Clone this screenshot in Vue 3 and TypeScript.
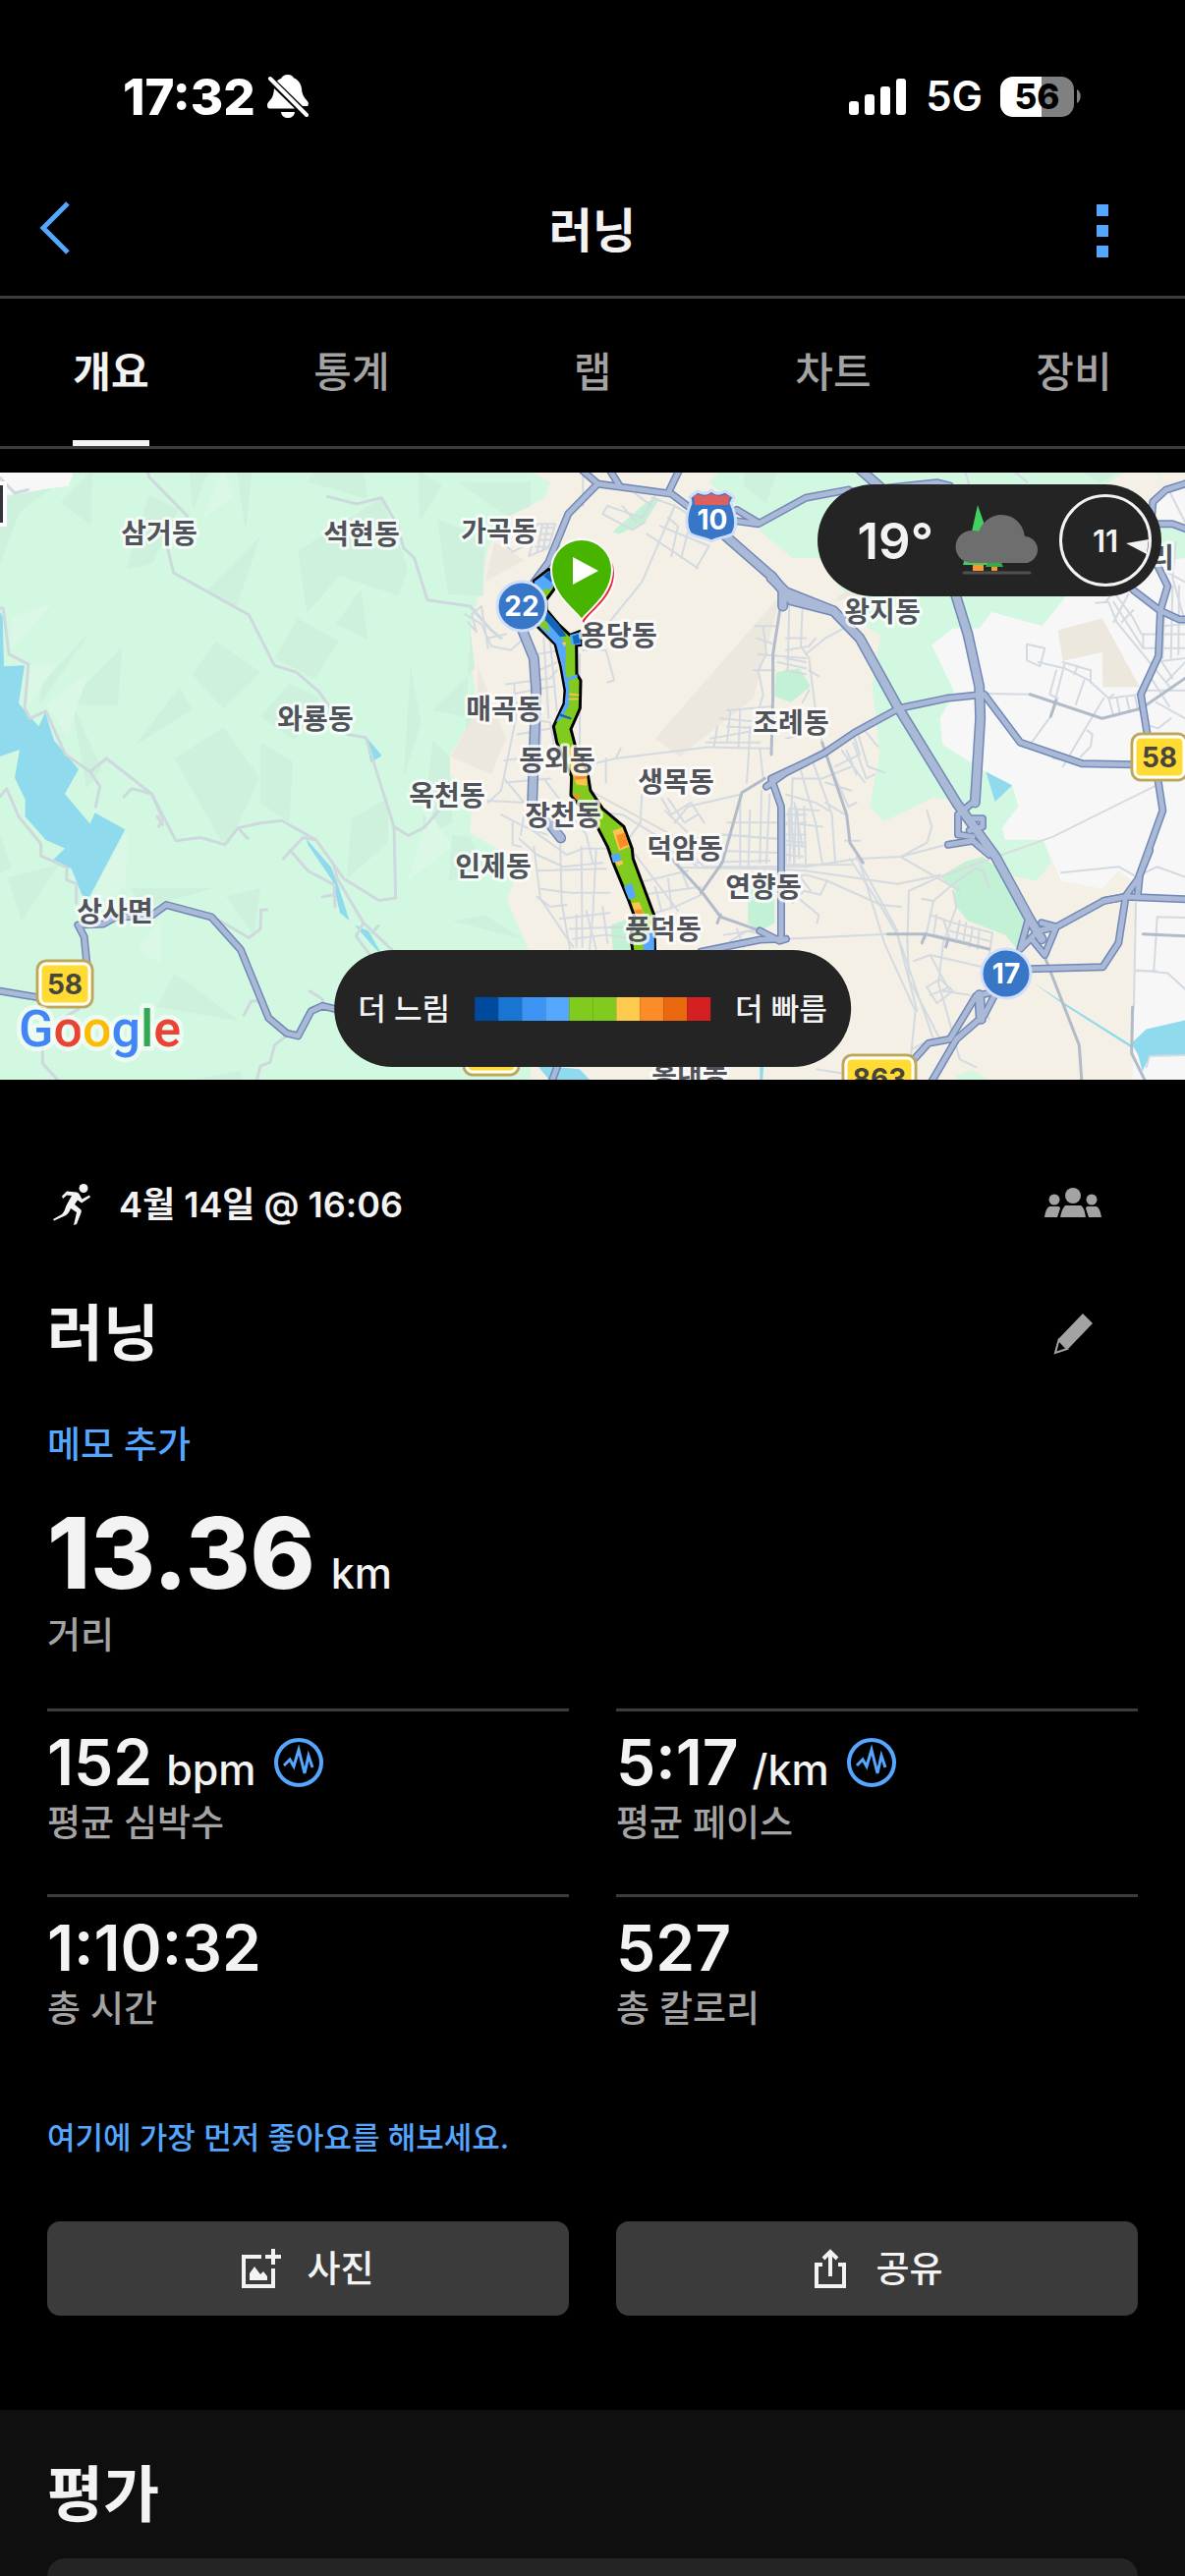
<script setup lang="ts">
import { ref } from 'vue'

interface Layer {
  name: string
  closed: boolean
  // one list of point strings per map sheet, west to east
  sheets: string[][]
}

interface Place {
  name: string
  x: number
  y: number
}

interface Stat {
  value: string
  unit?: string
  label: string
  graph: boolean
}

const tabs = ['개요', '통계', '랩', '차트', '장비']
const activeTab = ref('개요')

const stats: Stat[] = [
  { value: '152', unit: 'bpm', label: '평균 심박수', graph: true },
  { value: '5:17', unit: '/km', label: '평균 페이스', graph: true },
  { value: '1:10:32', label: '총 시간', graph: false },
  { value: '527', label: '총 칼로리', graph: false },
]

const paceColors = [
  '#004a9e', '#1876d2', '#3c94f4', '#56a8ff', '#80cb1e',
  '#80cb1e', '#fdcb4e', '#fb8c28', '#eb690e', '#d42020',
]

const sheetX = [0, 400, 800]
const sheetTransform = (i: number): string => `translate(${sheetX[i]} -11) scale(0.33333 0.40816)`

const mainRoads: string[][] = [
  [
    '0,1320 110,1335',
    '265,1250 257,1185 238,1155 315,1153 350,1137 465,1130 508,1105 645,1135 735,1217 820,1387 875,1425 910,1432 950,1370 985,1357 1060,1372 1200,1420',
  ],
  [
    '555,5 625,55 850,80 980,160',
    '650,5 690,58',
    '880,10 840,78',
    '625,55 535,130 475,250 430,300',
    '1050,120 1115,152',
    '1050,148 1115,155 1260,90 1390,70',
    '940,1222 1120,1192 1180,1190',
    '485,1545 505,1500',
    '1260,750 1155,790 1185,860 1185,1190',
    '1120,1170 1180,1195 1200,1190',
  ],
  [
    '190,75 460,52 500,60',
    '-60,810 0,775 120,725 210,675 345,615 490,590 605,580 715,700 905,753 1060,755',
    '1115,150 1120,100 1160,70 1218,55',
    '1130,155 1180,155 1230,170',
    '1135,260 1165,310 1143,370 1137,485 1083,580 1105,690',
    '1060,320 1140,370 1200,393 1230,393',
    '1135,790 1150,870 1075,1040 1035,1085 970,1095 825,1160 780,1150',
    '970,1095 1035,1085 1230,1091',
    '1110,970 1080,1030 1073,1085',
    '1035,1095 1015,1200 967,1260 740,1265',
    '577,845 525,880 525,930 570,935',
    '555,890 600,890 600,910 560,920',
    '495,955 570,945 620,980',
    '740,1140 715,1215 770,1170 825,1160 790,1230 750,1190',
    '620,1325 580,1332 500,1440 435,1450 385,1495',
    '640,1325 605,1380 520,1440 445,1545',
  ],
]

const expressways: string[][] = [
  [],
  [
    '980,160 1155,285 1215,345 1345,372',
    '390,410 430,490 437,570 425,850',
    '475,900 512,938',
    '1155,285 1190,320 1190,360',
  ],
  [
    '-45,290 0,325 145,372 225,440 340,610 520,850 600,940 640,985 740,1135 780,1190',
    '220,15 290,65',
    '515,325 555,430 590,560 593,640 577,850',
    '590,1330 595,1390',
  ],
]

const layers: Layer[] = [
  {
    name: 'urban',
    closed: true,
    sheets: [
      [],
      ['425,27 480,50 465,90 350,137 290,215 228,460 250,570 255,620 172,735 175,780 243,830 235,925 360,985 375,1040 347,1090 420,1230 420,1560 2430,1560 2430,20'],
      [],
    ],
  },
  {
    name: 'forest',
    closed: true,
    sheets: [
      [],
      [],
      [
        '-235,52 -200,20 1130,20 1165,65 1100,135 1218,160 1218,300 855,335 782,410 628,375 590,415 445,457 515,575 470,640 478,705 610,773 690,805 710,860 660,912 668,942 785,942 810,1000 765,1045 680,1032 640,985 600,900 520,845 450,838 300,897 255,860 285,730 275,640 262,560 288,435 190,380 190,340 100,240 20,240 -70,180 -150,110',
        '520,1530 570,1518 615,1540 615,1560 520,1560',
      ],
    ],
  },
  { name: 'urban', closed: true, sheets: [[], [], ['970,60 1030,27 1130,27 1165,65 1120,120 1070,100']] },
  {
    name: 'plain',
    closed: true,
    sheets: [
      ['0,20 228,20 210,60 30,82 0,80'],
      [],
      [
        '445,457 510,415 590,415 628,375 782,410 855,335 950,325 1130,250 1218,240 1218,1560 1058,1560 1068,1100 1050,1040 1015,1020 965,1065 840,1045 785,942 668,942 660,912 710,860 690,805 610,773 478,705 470,640 515,575',
        '1120,90 1165,65 1218,50 1218,150 1110,150',
      ],
    ],
  },
  {
    name: 'hill',
    closed: true,
    sheets: [
      [
        '30,85 160,65 60,125 0,255 0,95', '185,103 282,20 278,158', '455,82 545,118 465,255 387,267 410,200',
        '578,20 640,20 588,120', '722,20 770,20 750,175', '795,185 632,320 722,362', '940,50 960,20 1110,20 1123,93',
        '910,222 1165,90 1245,265 1217,333 1035,285 937,377', '1103,318 1123,443 1025,405', '908,390 1035,447 962,541 840,490',
        '660,448 795,525 682,617 587,530', '547,563 587,618 413,707', '682,662 793,788 700,950 675,945 533,740',
        '795,700 894,748 883,900 795,850', '277,422 122,605 122,560', '372,464 360,607 218,607 218,590',
        '218,600 310,765 265,815', '883,553 975,590 900,695 797,635', '1073,890 1185,838 1185,950 1058,1040',
        '690,1085 795,1063 775,1180', '395,1063 657,1063 445,1112', '533,1275 733,1395 480,1360', '23,1037 183,1003 65,1145',
        '0,930 35,1012 0,1028', '600,1540 735,1518 742,1550 600,1550',
      ],
      [
        '78,20 150,60 80,150', '195,50 420,50 420,110 350,137', '135,143 280,190 275,335 168,330', '235,410 250,515 120,620 240,640 220,700',
        '53,510 85,650 33,785', '122,695 172,735 180,900 85,940', '180,930 235,935 285,1020 170,1045', '180,1145 280,1130 395,1190',
        '1070,27 1170,27 1140,105 1070,60',
      ],
      ['910,27 1010,27 955,55'],
    ],
  },
  {
    name: 'glade',
    closed: true,
    sheets: [
      ['680,20 715,85 617,145', '35,387 160,353 33,470', '88,503 175,503 85,610', '270,527 140,605 205,685', '390,915 383,1060 287,1105 300,1050', '490,1140 490,1250 420,1215'],
      ['110,870 45,1045 180,960', '65,840 130,850 110,900'],
      [],
    ],
  },
  {
    name: 'dust',
    closed: true,
    sheets: [
      [],
      ['1185,330 1100,590 875,735 800,690', '260,510 345,690 300,780 175,735 255,620', '310,200 400,245 280,300'],
      ['830,420 965,390 1080,562 967,562 965,475 845,497', '190,320 300,320 140,350'],
    ],
  },
  {
    name: 'park',
    closed: true,
    sheets: [
      [],
      ['1170,525 1240,515 1275,560 1215,600 1165,585', '670,175 775,100 815,90 770,150 690,180', '1085,1055 1165,1030 1165,1150 1120,1170 1083,1150', '665,1155 735,1135 740,1230 672,1230'],
      ['470,1035 545,998 600,985 640,1010 730,1145 705,1215 670,1180 555,1145 520,1110 515,1065'],
    ],
  },
  {
    name: 'water',
    closed: true,
    sheets: [
      [
        '0,375 8,385 12,510 75,508 57,603 118,660 138,625 165,695 240,767 198,828 275,903 290,875 382,917 270,1090 250,1080 218,1015 163,992 198,964 140,943 77,885 77,842 45,788 60,718 0,735',
        '1115,683 1166,733 1132,750', '935,940 1010,1010 1030,1050 1067,1145 1038,1125 1015,1045 940,955', '1083,1155 1125,1170 1170,1235 1130,1200',
      ],
      ['440,1505 570,1515 610,1550 485,1550', '1120,1505 1132,1505 1128,1550 1120,1550'],
      ['610,773 690,807 638,848', '1055,1450 1100,1415 1218,1393 1218,1480 1110,1482 1088,1520 1075,1480', '755,1299 850,1350 1060,1457 1055,1462 848,1354'],
    ],
  },
  {
    name: 'lane',
    closed: false,
    sheets: [
      [
        '0,365 10,365 27,480 87,505 75,615 92,640 140,622 200,730 275,773 325,740 463,828 537,945 612,937 687,955 727,913 795,901 860,895 965,943 1050,1040 1157,1094 1208,1088 1203,910 1117,688 1060,680',
        '275,773 305,810 292,860', '378,835 403,815 463,828 497,890 485,910', '727,913 757,940', '480,885 497,905',
        '0,835 20,815 57,885 125,953 125,983 205,1012 203,1043 233,1052 233,1100', '450,20 455,38 572,135',
        '510,210 530,277 760,382 838,508 905,525 972,572 1010,615', '1000,87 1088,105 1165,90 1215,160 1232,215 1265,240 1305,345 1435,360 1500,420 1530,440',
        '1203,910 1247,932 1295,912 1340,870', '640,1130 760,1187 795,1165 797,1117 815,1117', '965,943 925,937 865,990',
        '885,968 940,1020 1020,1055 1023,1110', '1020,1010 1030,1040 1110,1150 1200,1220', '1110,1150 1087,1183 1130,1230', '1137,1175 1155,1157',
        '240,1365 185,1390', '130,1450 130,1500 180,1545', '945,1320 985,1340 985,1355', '885,1425 838,1455 825,1497 795,1507 783,1545',
        '800,1345 767,1345 745,1380', '0,40 45,78 85,70', '985,1085 1020,1080',
      ],
      [],
      [],
    ],
  },
  {
    name: 'street',
    closed: false,
    sheets: [
      [],
      [
        '340,205 365,225 400,210', '440,155 495,155 475,215 415,235 440,155', '455,165 490,165', '450,180 487,180', '445,195 480,195', '435,212 472,212', '455,158 440,225', '472,158 458,220',
        '580,27 580,110', '500,200 560,280 620,340', '655,110 640,130 730,170 770,150', '655,110 760,140 800,85', '790,90 860,110 760,300 660,400', '700,110 740,150', '860,110 960,160', '775,180 930,265', '815,160 965,210 925,265', '840,140 870,160 850,235', '905,160 880,240', '740,80 790,110',
        '580,470 650,470 675,545 655,550', '220,380 270,405 300,460 360,470 400,440', '230,400 255,425 240,380 270,360 290,465', '290,440 345,430',
        '345,555 480,540 500,520', '360,580 490,560', '350,610 400,595', '370,555 375,640 330,820 290,850', '440,480 510,470', '445,520 500,500', '460,440 475,640', '480,450 500,620',
        '400,640 480,650 490,700 475,760', '380,680 480,665', '340,745 430,735', '345,800 480,790', '290,845 400,850 340,790', '450,610 450,720', '570,480 570,720',
        '460,790 590,930 610,1000', '590,870 700,880 820,940 930,1010', '600,755 680,740 960,712 1155,715', '680,740 695,715', '650,740 650,800',
        '330,880 400,910 470,930', '365,900 365,955 390,960', '400,880 390,930', '410,910 530,980 580,965 660,965', '385,940 440,980 520,1010 640,1000', '430,960 450,1090 550,1210', '510,940 515,1100 540,1215', '575,960 578,1210', '620,970 610,1130 600,1215', '440,1020 650,1015', '450,1065 540,1075 660,1075', '440,1085 480,1110 530,1105', '510,1140 660,1125', '540,1165 700,1160', '550,1190 650,1180 740,1190', '590,1120 620,1215', '560,1130 560,1210', '640,1110 655,1200',
        '760,830 755,900 720,940', '820,840 850,880 910,850 950,900', '840,840 890,900 930,880', '860,900 900,860 1060,830', '780,930 900,1000 1150,995', '830,870 920,940 1000,930 1170,940', '870,1000 900,1060', '740,980 870,1120', '760,1080 940,1060', '780,1130 860,1110 940,1080', '800,1060 820,1120', '840,1040 850,1110', '750,1050 900,1020',
        '1105,410 1165,410', '1110,440 1165,455', '1100,520 1165,520', '1115,480 1260,490', '1130,410 1140,480 1115,520 1130,580 1110,640', '1020,620 1160,610', '1020,660 1120,665', '970,690 1110,670', '955,700 1120,700', '1030,620 1020,700', '1060,620 1055,715', '1090,660 1085,740 1080,800', '990,660 980,710', '1000,640 1140,650 1260,660', '1120,715 1130,790', '1210,350 1205,520', '1175,500 1260,515',
        '1060,830 1060,1010', '1090,870 1085,1010', '1020,900 1180,900', '1010,930 1180,940', '1125,820 1120,1000', '1150,830 1140,1000', '1000,970 1180,975', '950,1010 1260,1010', '1195,870 1200,1000', '1215,860 1225,1000', '1235,870 1240,990', '1200,880 1260,880', '1200,905 1260,900', '1200,930 1260,930', '1200,955 1260,960', '1200,980 1250,985', '1208,870 1212,990', '1225,850 1250,960',
        '1010,1180 1130,1165', '1030,1195 1080,1170 1140,1180', '1000,1210 1110,1190', '1050,1165 1070,1210',
      ],
      [
        '0,440 60,440', '0,470 70,460 90,440', '0,490 60,500', '50,365 45,460 70,490 90,620 110,700', '60,480 120,440 210,400', '0,520 60,530', '70,520 100,535', '70,570 50,600',
        '0,640 60,630', '0,690 50,680', '45,770 90,900 110,1000', '80,745 140,880 150,1000', '20,790 110,790', '0,830 90,850 130,870', '10,865 100,870', '0,900 110,910', '0,945 60,950', '20,790 10,1000', '55,860 60,1000', '30,860 25,1000', '110,790 200,760', '130,750 190,860 215,850', '120,800 200,820', '185,720 215,780', '205,700 245,790 270,780', '220,680 250,760 300,775', '240,670 280,710', '150,760 225,730 210,690', '170,720 240,800', '120,850 180,880',
        '0,1005 200,1005', '60,1010 220,990 350,985 490,955', '180,945 225,945', '350,985 430,950 445,910 430,870', '350,985 530,1070', '195,990 290,1110 340,1180 450,1440', '215,985 340,1170', '225,1000 300,1200 395,1370 380,1490', '340,1180 400,1370', '0,1040 60,1030 125,1045 105,1080 55,1070 20,1100', '30,1020 75,1070', '125,1045 290,1105 350,1110', '40,1090 100,1130 95,1150', '0,1190 310,1178', '415,1090 450,1095 500,1060 575,1015 600,1020 620,1060', '510,1070 520,1110 480,1200 465,1300 490,1370', '450,1095 425,1190', '440,1130 510,1150 630,1175 620,1230', '460,1130 450,1180', '480,1140 500,1190', '455,1180 560,1200', '530,1145 520,1190', '550,1150 540,1200', '570,1160 560,1210', '590,1165 585,1215', '500,1170 620,1195', '390,1245 440,1230 600,1260', '440,1230 500,1320', '430,1310 470,1290 510,1320 460,1350 430,1310', '440,1330 500,1310', '480,1320 560,1330', '370,1190 375,1290 470,1440', '385,1465 440,1440', '590,1340 620,1390', '490,1370 530,1490 580,1510', '95,1515 170,1525',
        '735,455 790,465 775,510 735,495 735,455', '770,500 850,515 925,545 985,590 1085,580', '845,500 930,520 930,550', '850,505 820,600 808,635 750,700', '825,520 805,580 830,590', '910,545 885,605', '890,510 880,530', '970,590 925,650 845,760', '985,590 1000,635', '1010,590 1020,630', '1040,590 1050,625', '1065,585 1075,620', '985,590 1000,580', '600,578 745,580', '920,670 935,680 930,710 900,735', '815,740 870,745', '545,20 560,60', '690,20 735,50',
        '1165,65 1218,150', '945,352 985,350 1010,400 1170,560', '1000,350 1090,465 1218,465', '1045,330 1000,400', '1060,370 1025,400', '975,350 1000,325 1060,390 1085,430 1218,430', '1090,430 1090,465', '1180,290 1218,400', '1150,410 1218,405', '1155,370 1150,490', '1180,310 1175,490', '1200,310 1198,480', '1120,500 1218,490', '1115,540 1170,610', '1160,550 1218,500', '1100,570 1218,570', '1130,600 1218,640', '1100,655 1135,665 1175,640', '1140,490 1180,540', '1190,200 1180,290', '1150,270 1218,300',
        '840,1025 1015,1010 1070,1035 1133,1010 1218,1035', '1068,1100 1062,1360', '1130,1178 1133,1135 1218,1137', '1130,1178 1123,1268', '1072,1268 1165,1275 1218,1315', '1100,1510 1110,1482 1218,1480', '1065,1270 1130,1270',
        '-330,1012 -60,1015 60,1020 340,1053 450,1035', '375,1070 370,1200', '375,1070 470,1035',
      ],
    ],
  },
  {
    name: 'rail',
    closed: false,
    sheets: [[], ['575,720 600,820 850,930 950,1010'], ['470,1035 815,935 1135,805', '340,1053 470,1030']],
  },
  {
    name: 'avenue',
    closed: false,
    sheets: [
      [],
      ['1185,350 1160,480 1160,580 1155,730', '1135,790 1065,825 1005,1000 940,1075', '850,990 945,1075 1000,1135 1140,1175', '1000,1130 990,1150'],
      ['110,700 185,880 195,950 235,1000', '310,1178 425,1178 620,1215', '745,580 965,640 1085,615 1218,540', '825,595 808,635', '790,1235 895,1455 903,1550', '1090,1178 1218,1183', '1058,1360 1055,1475 1100,1550', '425,1178 415,1200', '495,1190 488,1210'],
    ],
  },
  { name: 'main-edge', closed: false, sheets: mainRoads },
  { name: 'express-edge', closed: false, sheets: expressways },
  { name: 'main', closed: false, sheets: mainRoads },
  { name: 'express', closed: false, sheets: expressways },
]

const places: Place[] = [
  { name: '삼거동', x: 162, y: 61 },
  { name: '석현동', x: 368, y: 62 },
  { name: '와룡동', x: 321, y: 250 },
  { name: '상사면', x: 117, y: 446 },
  { name: '가곡동', x: 508, y: 59 },
  { name: '용당동', x: 630, y: 165 },
  { name: '매곡동', x: 513, y: 240 },
  { name: '동외동', x: 567, y: 292 },
  { name: '옥천동', x: 455, y: 328 },
  { name: '장천동', x: 573, y: 348 },
  { name: '인제동', x: 502, y: 400 },
  { name: '생목동', x: 688, y: 314 },
  { name: '덕암동', x: 697, y: 382 },
  { name: '연향동', x: 777, y: 421 },
  { name: '풍덕동', x: 675, y: 464 },
  { name: '조례동', x: 805, y: 254 },
  { name: '왕지동', x: 898, y: 141 },
  { name: '홍내동', x: 702, y: 611 },
  { name: '리', x: 1182, y: 86 },
]
</script>

<template>
  <div class="page">
    <header>
      <div class="status">
        <div class="status-side">
          <span class="clock">17:32</span>
          <svg class="bell" viewBox="0 0 42 44" aria-hidden="true">
            <path d="M21 0c-4 0-6 2-7 4-2 .6-3 1.500-4 2.600L36 32h5c1.500-2 1-4-1-6-3-3-5-7-5-12C34 7 29 4 27 3.500 26 1.500 24 0 21 0z" fill="#fff" />
            <path d="M7 14c-.5 7-2 10-5 13-2 2-2.500 4-1.500 6.500.5.8 1 1 2 1H28z" fill="#fff" />
            <path d="M14 38h14c-.5 4-3.500 6-7 6s-6.500-2-7-6z" fill="#fff" />
            <path d="M3 4l37 37" stroke="#fff" stroke-width="4" stroke-linecap="round" />
          </svg>
        </div>
        <div class="status-side">
          <svg class="signal" viewBox="0 0 58 38" fill="#fff" aria-hidden="true">
            <rect x="0" y="24" width="10" height="14" rx="3" />
            <rect x="16" y="17" width="10" height="21" rx="3" />
            <rect x="32" y="9" width="10" height="29" rx="3" />
            <rect x="48" y="1" width="10" height="37" rx="3" />
          </svg>
          <span class="network">5G</span>
          <span class="battery">56</span>
          <svg class="battery-tip" viewBox="0 0 4 14" aria-hidden="true"><path d="M0 0c5 3 5 11 0 14z" fill="#808080" /></svg>
        </div>
      </div>

      <div class="nav">
        <button type="button" class="icon-button back" aria-label="뒤로">
          <svg width="32" height="54" viewBox="0 0 32 54" fill="none"><path d="M29 2L4 27l25 25" stroke="#54a6ff" stroke-width="5" /></svg>
        </button>
        <h1 class="nav-title">러닝</h1>
        <button type="button" class="icon-button more" aria-label="더보기">
          <svg width="12" height="54" viewBox="0 0 12 54" fill="#54a6ff">
            <rect width="12" height="12" /><rect y="21" width="12" height="12" /><rect y="42" width="12" height="12" />
          </svg>
        </button>
      </div>

      <nav class="tabs" role="tablist">
        <button
          v-for="tab in tabs"
          :key="tab"
          type="button"
          role="tab"
          class="tab"
          :class="{ active: tab === activeTab }"
          :aria-selected="tab === activeTab"
          @click="activeTab = tab"
        >{{ tab }}</button>
      </nav>
    </header>

    <main>
      <section class="map" aria-label="지도">
        <svg class="map-canvas" viewBox="0 0 1206 618" preserveAspectRatio="xMidYMid slice">
          <template v-for="(layer, li) in layers" :key="li">
            <g v-for="(shapes, si) in layer.sheets" :key="si" :class="layer.name" :transform="sheetTransform(si)">
              <component :is="layer.closed ? 'polygon' : 'polyline'" v-for="(points, pi) in shapes" :key="pi" :points="points" />
            </g>
          </template>

          <!-- recorded track, coloured by pace -->
          <g class="track" :transform="sheetTransform(1)">
            <polygon class="track-body" points="430,297 475,268 510,285 490,320 467,345 469,370 505,405 540,432 570,423 575,457 560,458 561,530 573,545 571,615 543,667 560,720 595,780 603,820 640,865 705,910 730,965 733,990 797,1130 800,1240 735,1240 725,1180 740,1140 720,1095 672,1000 655,960 620,905 543,832 545,785 500,700 490,660 522,603 525,570 512,510 495,455 440,410" />
            <g class="pace-light">
              <polygon points="432,298 472,275 500,288 485,315 450,330 440,380 500,420 528,455 526,520 538,560 538,605 515,640 497,650 524,605 528,570 515,510 498,455 442,408" />
              <polygon points="705,1060 728,1050 742,1085 720,1092" />
              <polygon points="665,980 690,975 697,995 672,1000" />
              <polygon points="762,1190 797,1160 798,1240 768,1240" />
              <polygon points="528,540 562,530 564,538 530,547" />
              <polygon points="540,432 570,425 573,455 545,458" />
            </g>
            <g class="pace-deep">
              <polygon points="460,285 478,272 500,288 482,300" />
              <polygon points="467,370 505,405 530,435 510,437 465,395" />
              <polygon points="548,435 566,430 571,452 552,455" />
              <polygon points="510,628 545,638 543,643 508,634" />
            </g>
            <polygon class="pace-green" points="458,320 475,315 467,335 455,335" />
            <polygon class="pace-green" points="445,395 470,400 480,425 442,408" />
            <g class="pace-warm">
              <polygon points="538,577 568,580 568,584 538,582" />
              <polygon points="536,590 566,590 566,594 536,594" />
              <polygon points="530,710 555,715 592,780 592,808 560,805 548,780" />
              <polygon points="670,920 700,912 722,960 690,970" />
              <polygon points="680,998 700,994 702,1004 684,1008" />
              <polygon points="728,1100 752,1098 768,1130 742,1132" />
              <polygon points="515,450 530,450 524,462" />
            </g>
            <g class="pace-hot">
              <polygon points="682,932 708,925 718,955 693,965" />
              <polygon points="548,832 575,827 560,843" />
              <polygon points="738,1118 760,1116 765,1130 742,1132" />
              <polygon points="552,785 590,783 591,790 556,793" />
            </g>
          </g>

          <rect x="-6" y="11" width="11" height="42" fill="#333538" stroke="#fff" stroke-width="4" />
          <text v-for="place in places" :key="place.name" class="place" :x="place.x" :y="place.y + 11">{{ place.name }}</text>

          <!-- road shields -->
          <g class="yellow-shield">
            <rect x="38" y="497" width="56" height="47" rx="9" class="rim" />
            <rect x="41" y="500" width="50" height="41" rx="6" />
            <rect x="1152" y="266" width="56" height="47" rx="9" class="rim" />
            <rect x="1155" y="269" width="50" height="41" rx="6" />
            <rect x="858" y="593" width="74" height="47" rx="9" class="rim" />
            <rect x="861" y="596" width="68" height="41" rx="6" />
            <rect x="472" y="567" width="56" height="46" rx="9" class="rim" />
            <rect x="475" y="570" width="50" height="40" rx="6" />
            <text x="66" y="531">58</text>
            <text x="1180" y="300">58</text>
            <text x="895" y="627">863</text>
          </g>
          <g class="blue-shield">
            <circle cx="531" cy="136" r="25" />
            <circle cx="1024" cy="510" r="25" />
            <path d="M702 25l8-6c5 3 10 3 14-1 4 4 9 4 14 1l9 6-3 6c5 12 7 22 2 31-5 4-15 4-22 8-7-4-17-4-22-8-5-9-4-19 1-31z" />
            <path class="crown" d="M706 24l5-2c5 3 9 2 13-1 4 3 9 4 14 1l5 2-2 9h-34z" />
            <text x="531" y="146">22</text>
            <text x="1024" y="520">17</text>
            <text x="725" y="58">10</text>
          </g>

          <!-- start and finish pins -->
          <path d="M597 155c-6-9-32-25-32-52a32 32 0 0 1 62-2c0 29-26 42-30 54z" fill="#fff" />
          <path d="M594 153c-3-8-31-24-31-51a31 31 0 0 1 62 0c0 26-26 40-31 51z" fill="#ee2338" />
          <path d="M592 150c-4-8-31-24-31-51a31 31 0 0 1 62 0c0 27-27 43-31 51z" fill="#47b400" stroke="#fff" stroke-width="2" />
          <path d="M583 86v28l26-14z" fill="#fff" />

          <text class="google" x="19" y="584"><tspan fill="#4285f4">G</tspan><tspan fill="#ea4335">o</tspan><tspan fill="#fbbc05">o</tspan><tspan fill="#4285f4">g</tspan><tspan fill="#34a853">l</tspan><tspan fill="#ea4335">e</tspan></text>
        </svg>

        <div class="weather">
          <span class="temperature">19°</span>
          <svg width="84" height="72" viewBox="0 0 84 72" aria-hidden="true">
            <path d="M23 0l-8 36-7 25h36z" fill="#44d060" />
            <path d="M31 63l9-20 9 20z" fill="#2dae4a" />
            <path d="M18 61h11v6H18zM37 63h6v4h-6z" fill="#ff9430" />
            <path d="M17 59a16 16 0 0 1 0-33c3 0 5 0 7 1C28 17 37 10 47 10c13 0 22 9 24 22a13 13 0 0 1-1 27z" fill="#6e6e6e" />
            <path d="M9 69h67" stroke="#505050" stroke-width="3" stroke-linecap="round" />
          </svg>
          <div class="wind">
            <span>11</span>
            <svg class="wind-arrow" width="24" height="16" viewBox="0 0 24 16" aria-hidden="true"><path d="M0 4l23-4-2 15z" fill="#f3f3f3" /></svg>
          </div>
        </div>

        <div class="legend">
          <span>더 느림</span>
          <div class="pace-bar">
            <i v-for="(color, i) in paceColors" :key="i" :style="{ background: color }"></i>
          </div>
          <span>더 빠름</span>
        </div>
      </section>

      <section class="summary">
        <div class="row meta">
          <svg width="39" height="42" viewBox="0 0 39 42" fill="#f3f3f3" aria-hidden="true">
            <circle cx="31" cy="4.500" r="4.500" />
            <path d="M14 7.500l10 1c2 .5 3 2 3.500 3.500l2 3.500 7.500-4 1 2-9 6-4-3-3 4.500 6 5c1 1 1 2 .5 3.500L24 41l-3 1 3-13-6-4c-2 5-4 7-7 8L1 37.500 0 36l9-5c3-3 3-6 5-10l5-9-5-.5-4 3.500-1-2.500z" />
          </svg>
          <time class="date">4월 14일 @ 16:06</time>
          <button type="button" class="icon-button end" aria-label="공개 범위">
            <svg width="58" height="34" viewBox="0 0 58 34" fill="#a3a3a3">
              <circle cx="29" cy="8" r="8" /><circle cx="10" cy="12" r="5.500" /><circle cx="48" cy="12" r="5.500" />
              <path d="M16 30c1-6 3-10 5-12h16c3 2 4 6 5 12zM0 30c1-6 2-9 5-11h10l1 2-3 9zM58 30c-1-6-2-9-5-11H43l-1 2 3 9z" />
            </svg>
          </button>
        </div>
        <div class="row title-row">
          <h2>러닝</h2>
          <button type="button" class="icon-button pencil" aria-label="이름 수정">
            <svg width="40" height="42" viewBox="0 0 40 42"><path d="M30 0l10 10-25 26L5 26z" fill="#a3a3a3" /><path d="M5.500 27L2 40l12-4z" fill="none" stroke="#a3a3a3" stroke-width="2" /></svg>
          </button>
        </div>
        <a class="memo" href="#memo">메모 추가</a>
        <p class="distance"><strong>13.36</strong><span class="unit">km</span></p>
        <p class="label distance-label">거리</p>

        <div class="stats">
          <div v-for="stat in stats" :key="stat.label" class="stat">
            <p class="value">
              <span class="number">{{ stat.value }}</span>
              <span v-if="stat.unit" class="unit">{{ stat.unit }}</span>
              <svg v-if="stat.graph" class="graph" viewBox="0 0 50 50" fill="none" stroke="#54a6ff" aria-hidden="true">
                <circle cx="25" cy="25" r="23" stroke-width="4" />
                <path d="M10 28l6-6 4 7 5-17 6 24 4-18 4 12" stroke-width="3" />
              </svg>
            </p>
            <p class="label">{{ stat.label }}</p>
          </div>
        </div>

        <a class="like" href="#likes">여기에 가장 먼저 좋아요를 해보세요.</a>

        <div class="actions">
          <button type="button" class="action">
            <svg width="40" height="40" viewBox="0 0 40 40" aria-hidden="true">
              <path d="M20 8H2v30h30V20M32 0v16M24 8h16" fill="none" stroke="#f3f3f3" stroke-width="4" />
              <path d="M8 32v-7l5-7 6 8 3-3 4 5v4z" fill="#f3f3f3" />
            </svg>
            사진
          </button>
          <button type="button" class="action">
            <svg width="40" height="40" viewBox="0 0 40 40" fill="none" stroke="#f3f3f3" stroke-width="4" aria-hidden="true">
              <path d="M12 16H6v22h28V16h-6M20 28V3M13 10l7-7 7 7" />
            </svg>
            공유
          </button>
        </div>
      </section>

      <section class="review">
        <h2>평가</h2>
        <div class="card"></div>
      </section>
    </main>
  </div>
</template>

<style>
body {
  background: #000;
}
</style>

<style scoped>
.page {
  display: flex;
  flex-direction: column;
  min-height: 100vh;
  background: #000;
  color: #f3f3f3;
  font-family: Inter, 'Noto Sans CJK KR', sans-serif;
  font-weight: 500;
  line-height: 1;
}
h1, h2, p {
  margin: 0;
}
h1, h2 {
  font-weight: 600;
}
button {
  padding: 0;
  border: 0;
  background: none;
  color: inherit;
  font: inherit;
  cursor: pointer;
}
a {
  display: block;
  color: #54a6ff;
  line-height: 48px;
  text-decoration: none;
}
svg {
  display: block;
  flex: none;
}
main {
  display: flex;
  flex: 1;
  flex-direction: column;
}

.status {
  display: flex;
  align-items: center;
  justify-content: space-between;
  height: 140px;
  padding: 28px 106px 0 125px;
  color: #fff;
}
.status-side {
  display: flex;
  align-items: center;
}
.clock {
  font-size: 51px;
  font-weight: 800;
}
.bell {
  width: 42px;
  height: 44px;
  margin-left: 12px;
}
.signal {
  width: 58px;
  height: 38px;
}
.network {
  margin: 0 18px 0 20px;
  font-size: 42px;
  font-weight: 600;
}
.battery {
  width: 75px;
  border-radius: 13px;
  background: linear-gradient(90deg, #fff 42px, #808080 42px);
  color: #000;
  font-size: 35px;
  font-weight: 800;
  line-height: 41px;
  text-align: center;
}
.battery-tip {
  width: 4px;
  height: 14px;
  margin-left: 3px;
}

.nav {
  display: grid;
  grid-template-columns: 1fr auto 1fr;
  align-items: center;
  height: 133px;
  border-bottom: 3px solid #3c3c3c;
}
.nav-title {
  font-size: 48px;
}
.icon-button {
  display: flex;
}
.back {
  justify-self: start;
  padding: 0 0 6px 40px;
}
.more {
  justify-self: end;
  padding-right: 78px;
}
.tabs {
  display: flex;
  justify-content: space-between;
  height: 150px;
  padding: 0 74px;
  border-bottom: 3px solid #3c3c3c;
}
.tab {
  min-width: 78px;
  border-top: 6px solid transparent;
  border-bottom: 6px solid transparent;
  color: #a3a3a3;
  font-size: 42px;
}
.tab.active {
  border-bottom-color: #f3f3f3;
  color: #f3f3f3;
  font-weight: 600;
}

.map {
  position: relative;
  height: 618px;
  margin-top: 24px;
  overflow: hidden;
  background: #d3f8e2;
}
.map-canvas {
  width: 100%;
  height: 100%;
}
.map-canvas :is(polygon, polyline) {
  vector-effect: non-scaling-stroke;
}
.map-canvas polyline {
  fill: none;
  stroke-linecap: round;
  stroke-linejoin: round;
}
.urban { fill: #f5f0e5; }
.forest { fill: #d3f8e2; }
.plain { fill: #f8f7f7; }
.hill { fill: #cdf1dc; }
.glade { fill: #dbf8e7; }
.dust { fill: #ede8de; }
.park { fill: #c3f1d6; }
.water { fill: #90daee; }
.lane { stroke: #cdd9dd; stroke-width: 3px; }
.street { stroke: #d3dae1; stroke-width: 2px; }
.rail { stroke: #dcdadc; stroke-width: 2px; }
.avenue { stroke: #b2bbca; stroke-width: 3px; }
.main-edge { stroke: #7188b8; stroke-width: 8px; }
.main { stroke: #a9b9d6; stroke-width: 5px; }
.express-edge { stroke: #7188b8; stroke-width: 11px; }
.express { stroke: #a9b9d6; stroke-width: 8px; }
.track-body {
  fill: #80cb1e;
  stroke: #000;
  stroke-width: 3px;
  stroke-linejoin: round;
}
.pace-light { fill: #56a8ff; }
.pace-deep { fill: #1464b8; }
.pace-green { fill: #80cb1e; }
.pace-warm { fill: #fdc34e; }
.pace-hot { fill: #fb8c28; }
.place {
  fill: #50545a;
  stroke: rgba(255, 255, 255, 0.8);
  stroke-width: 6px;
  stroke-linejoin: round;
  paint-order: stroke;
  font-size: 28px;
  font-weight: 600;
  text-anchor: middle;
}
.yellow-shield rect {
  fill: #ffdb33;
  stroke: #fff;
  stroke-width: 3px;
}
.yellow-shield .rim {
  stroke: #bda75f;
}
.yellow-shield text {
  fill: #47453c;
  font-size: 28px;
  font-weight: 700;
  text-anchor: middle;
}
.blue-shield circle,
.blue-shield path {
  fill: #3877c8;
  stroke: #cfdffb;
  stroke-width: 3px;
}
.blue-shield .crown {
  fill: #dc6060;
  stroke: none;
}
.blue-shield text {
  fill: #fff;
  font-size: 28px;
  font-weight: 700;
  text-anchor: middle;
}
.google {
  stroke: rgba(255, 255, 255, 0.6);
  stroke-width: 9px;
  stroke-linejoin: round;
  paint-order: stroke;
  font-family: Roboto, sans-serif;
  font-size: 52px;
  font-weight: 500;
}

.weather {
  position: absolute;
  top: 12px;
  right: 24px;
  display: flex;
  align-items: center;
  gap: 22px;
  height: 114px;
  padding: 0 10px 0 40px;
  border-radius: 57px;
  background: #242424;
}
.temperature {
  font-size: 51px;
  font-weight: 600;
}
.wind {
  position: relative;
  display: flex;
  align-items: center;
  justify-content: center;
  box-sizing: border-box;
  width: 94px;
  height: 94px;
  border: 3px solid #f3f3f3;
  border-radius: 50%;
  font-size: 31px;
  font-weight: 600;
}
.wind-arrow {
  position: absolute;
  top: 43px;
  right: -1px;
}
.legend {
  position: absolute;
  bottom: 13px;
  left: 50%;
  display: flex;
  align-items: center;
  gap: 25px;
  height: 119px;
  padding: 0 24px;
  border-radius: 60px;
  background: #242424;
  font-size: 31px;
  white-space: nowrap;
  transform: translateX(-50%);
}
.pace-bar {
  display: flex;
  width: 240px;
  height: 24px;
}
.pace-bar i {
  flex: 1;
}

.summary {
  padding: 103px 48px 96px;
}
.row {
  display: flex;
  align-items: center;
}
.meta {
  height: 48px;
  padding: 0 37px 0 6px;
}
.date {
  margin-left: 28px;
  font-size: 36px;
  font-weight: 600;
}
.end {
  margin-left: auto;
}
.title-row {
  justify-content: space-between;
  margin-top: 72px;
}
h2 {
  font-size: 62px;
  line-height: 72px;
}
.pencil {
  margin-right: 46px;
}
.memo {
  margin-top: 53px;
  font-size: 37px;
}
.distance {
  display: flex;
  align-items: baseline;
  gap: 16px;
  margin-top: 36px;
}
.distance strong {
  font-size: 100px;
  font-weight: 800;
}
.unit {
  font-size: 43px;
  font-weight: 500;
}
.label {
  color: #a3a3a3;
  font-size: 37px;
  line-height: 48px;
}
.distance-label {
  margin-top: 10px;
}
.stats {
  display: grid;
  grid-template-columns: 1fr 1fr;
  column-gap: 48px;
  margin-top: 50px;
}
.stat {
  padding: 20px 0 48px;
  border-top: 3px solid #3c3c3c;
}
.value {
  display: flex;
  align-items: baseline;
  gap: 14px;
  margin-bottom: 6px;
}
.number {
  font-size: 64px;
  font-weight: 600;
}
.graph {
  align-self: center;
  width: 50px;
  height: 50px;
  margin-left: 4px;
}
.like {
  margin-top: 35px;
  font-size: 31px;
}
.actions {
  display: grid;
  grid-template-columns: 1fr 1fr;
  gap: 48px;
  margin-top: 61px;
}
.action {
  display: flex;
  align-items: center;
  justify-content: center;
  gap: 26px;
  height: 96px;
  border-radius: 13px;
  background: #3b3b3b;
  font-size: 37px;
}
.review {
  display: flex;
  flex: 1;
  flex-direction: column;
  gap: 28px;
  padding: 51px 48px 0;
  background: #0f0f0f;
}
.card {
  flex: 1;
  border-radius: 26px 26px 0 0;
  background: #242424;
}
</style>
